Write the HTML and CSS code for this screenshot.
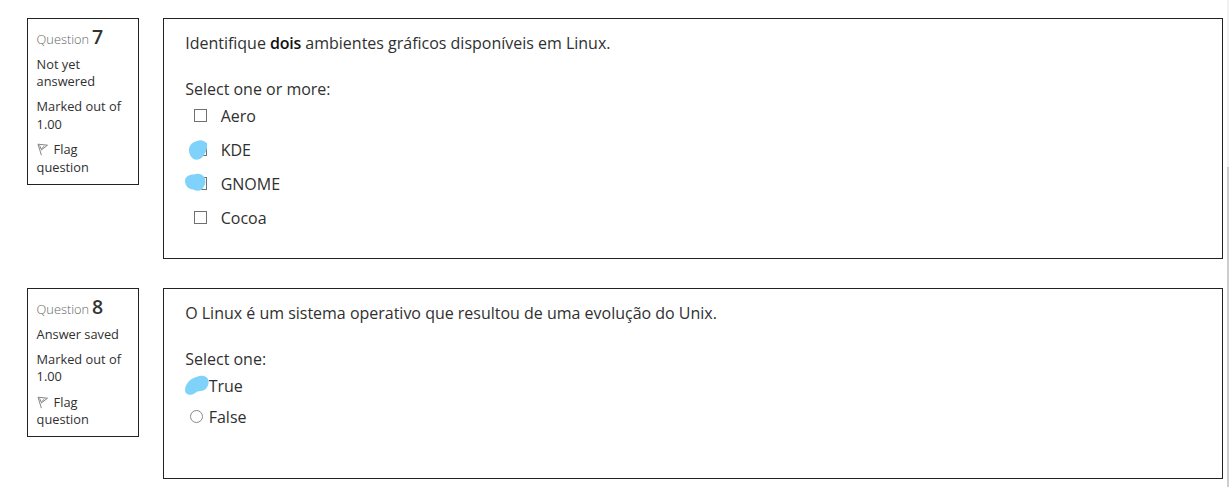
FILE: index.html
```html
<!DOCTYPE html>
<html lang="pt">
<head>
<meta charset="utf-8">
<title>Quiz</title>
<link rel="stylesheet" href="styles.css">
</head>
<body>
<main class="quiz">
  <section class="question q7">
    <aside class="info">
      <h3 class="number">Question <b>7</b></h3>
      <p>Not yet<br>answered</p>
      <p>Marked out of<br>1.00</p>
      <p><svg class="flag" viewBox="0 0 12 13"><path d="M1 1.2L10.5 2.2L4 7.2M1 1.2L4.4 12.2M2.6 2.4L4.2 6.2L7.4 3"/></svg>Flag<br>question</p>
    </aside>
    <div class="content">
      <p class="text">Identifique <b>dois</b> ambientes gráficos disponíveis em Linux.</p>
      <p class="prompt">Select one or more:</p>
      <ul class="options">
        <li><i class="check"></i>Aero</li>
        <li><i class="check"></i>KDE
          <svg class="mark" viewBox="0 0 32 34"><path d="M15 8C19 6 23 8 25 10.500C25.500 15 24 19 22.500 21C20.500 25 17 27.500 13 26.500C9 25.500 6.500 20 7 16C8 11 11 9 15 8Z"/></svg></li>
        <li><i class="check"></i>GNOME
          <svg class="mark" viewBox="0 0 32 34"><path d="M3 14C3 9 8 7.500 12 7.500C17 5.500 22 8 23 12C24 16 23 18 21.500 20C20 24 15 25 11.500 22.500C8 22.500 3 20 3 14Z"/></svg></li>
        <li><i class="check"></i>Cocoa</li>
      </ul>
    </div>
  </section>
  <section class="question q8">
    <aside class="info">
      <h3 class="number">Question <b>8</b></h3>
      <p>Answer saved</p>
      <p>Marked out of<br>1.00</p>
      <p><svg class="flag" viewBox="0 0 12 13"><path d="M1 1.2L10.5 2.2L4 7.2M1 1.2L4.4 12.2M2.6 2.4L4.2 6.2L7.4 3"/></svg>Flag<br>question</p>
    </aside>
    <div class="content">
      <p class="text">O Linux é um sistema operativo que resultou de uma evolução do Unix.</p>
      <p class="prompt">Select one:</p>
      <ul class="options single">
        <li><i class="radio"></i>True
          <svg class="mark" viewBox="0 0 32 34"><path d="M3 20C3 14 9 8 15 6.800C20 4.500 26 6.500 26.600 11C27 17 23 21 18.500 21C14 21 13 24.500 9 24.700C5.500 25 3 23 3 20Z"/></svg></li>
        <li><i class="radio"></i>False</li>
      </ul>
    </div>
  </section>
</main>
<div class="scrollbar"></div>
</body>
</html>
```

FILE: styles.css
```css
* { box-sizing: border-box; }
body { margin: 0; height: 487px; overflow: hidden; display: flex; background: #fff; color: #303030; font: 16px/24px "Open Sans", "Noto Sans", sans-serif; }
p, h3, ul { margin: 0; padding: 0; }
.quiz { flex: 1; padding: 18px 4px 0 27px; display: flex; flex-direction: column; gap: 29px; }
.question { display: flex; align-items: flex-start; gap: 24px; white-space: nowrap; }
.info { width: 112px; border: 1px solid #222; padding: 4px 8.6px 7px; font-size: 12.8px; line-height: 17.2px; }
.info p { margin-bottom: 8.5px; }
.info p:last-child { margin-bottom: 0; }
.number { font-size: 12.8px; font-weight: 300; color: #666; line-height: 27px; margin-bottom: 2.500px; }
.number b { font-size: 19.5px; font-weight: 600; color: #333; margin-left: -.5px; }
.flag { width: 12px; height: 13px; margin-right: 5px; vertical-align: -2px; fill: none; stroke: #777; stroke-width: .9; }
.q7 .info { height: 167px; }
.q8 .info { height: 149px; }
.content { flex: 1; border: 1px solid #222; padding: 12px 21.2px; }
.q7 .content { height: 241px; }
.q8 .content { height: 191px; padding-top: 11.500px; }
.text { margin-bottom: 22px; letter-spacing: -.01px; }
.text b { font-weight: 600; color: #111; letter-spacing: -.2px; }
.options { list-style: none; }
.options li { position: relative; display: flex; align-items: center; height: 34px; padding-left: 8.5px; }
.prompt { margin-bottom: -2.5px; }
.check { width: 13px; height: 13px; border: 1px solid #707070; margin: 0 14px 0 0; }
.options.single { margin-top: 2px; }
.options.single li { height: 31.5px; padding-left: 4.500px; }
.radio { width: 13px; height: 13px; border: 1.5px solid #888; border-radius: 50%; margin: -2px 6px 0 0; }
.options .mark { position: absolute; left: -3px; top: 0; width: 32px; height: 34px; fill: #7fd3fb; }
.single .mark { top: 0; }
.scrollbar { width: 2px; background: linear-gradient(#f1f1f1 0 167px, #cdcdcd 167px); }
```
